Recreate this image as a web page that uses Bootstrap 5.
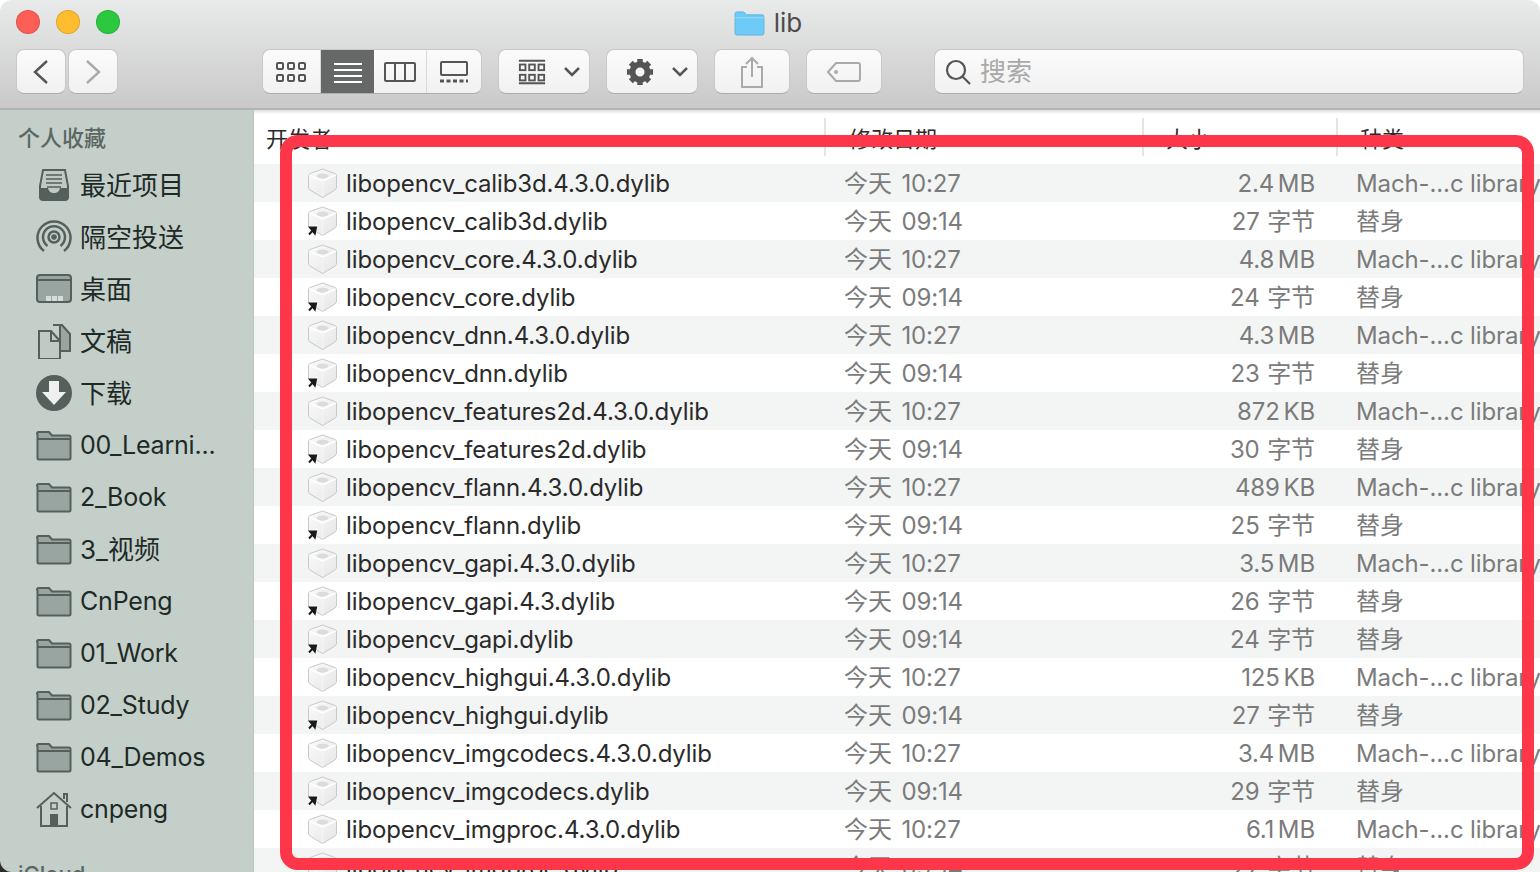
<!DOCTYPE html>
<html lang="zh-CN">
<head>
  <meta charset="UTF-8">
  <title>lib</title>
  <link rel="stylesheet" href="https://cdn.jsdelivr.net/npm/bootstrap@5.3.0/dist/css/bootstrap.min.css">
  <style>
    html, body { height: 100%; }
    body { background: #fff; overflow: hidden; font-family: Inter, "Noto Sans CJK SC", sans-serif; }
    .win { width: 1540px; height: 872px; position: relative; overflow: hidden; background: #fff; }
    .topbar { height: 110px; background: linear-gradient(#e9eaea, #c9c9c9); border-bottom: 2px solid #b3b3b3; border-radius: 12px 12px 0 0; }
    .titlerow { height: 49px; padding: 0 4px 3px 0; position: relative; }
    .lights { position: absolute; left: 16px; top: 10px; gap: 16px; }
    .light { width: 24px; height: 24px; border-radius: 50%; border: 1px solid rgba(0,0,0,.12); }
    .titletext { font-size: 26px; line-height: 46px; color: #4c4c4c; margin-left: 9px; }
    .tools { padding-left: 16px; height: 46px; }
    .tbtn { height: 45px; background: linear-gradient(#fbfbfb, #f1f1f1); border: 1px solid #c9c9c9; border-bottom-color: #aeaeae; border-radius: 8px; display: flex; align-items: center; justify-content: center; }
    .b-nav { width: 50px; }
    .b-views { width: 220px; margin-left: 144px; overflow: hidden; align-items: stretch; justify-content: flex-start; }
    .seg { display: flex; align-items: center; justify-content: center; border-right: 1px solid #d8d8d8; }
    .seg.on { background: #666867; border-right: 0; height: 47px; margin-top: -1px; }
    .b-menu { width: 92px; padding-left: 19px; gap: 18px; justify-content: flex-start; }
    .b-wide { width: 76px; }
    .searchbox { width: 590px; margin-left: 52px; justify-content: flex-start; padding-left: 10px; gap: 9px; font-size: 26px; color: #a9a9a9; }
    .main { height: 762px; background: #2b2b2b; }
    .side { width: 254px; flex: none; background: #c4cfca; border-right: 1px solid #b9c3bf; height: 100%; padding-top: 13px; position: relative; border-bottom-left-radius: 12px; overflow: hidden; }
    .side-h { font-size: 22px; font-weight: 500; color: #5b6762; padding-left: 18px; line-height: 30px; margin-bottom: 6px; }
    .side-cloud { margin-top: 24px; }
    .side-i { height: 52px; padding-left: 36px; color: #1d2a26; font-size: 26px; gap: 8px; white-space: nowrap; }
    .side-latin { font-size: 25px; letter-spacing: -.2px; padding-top: 1px; }
    .side-ic { width: 36px; height: 36px; flex: none; }
    .listing { flex: 1; min-width: 0; background: #fff; box-shadow: inset 0 5px 3px -3px #ddd; padding-top: 8px; }
    .hdr { height: 46px; font-size: 22px; color: #2b2b2b; line-height: 42px; }
    .hc { overflow: hidden; height: 38px; white-space: nowrap; }
    .hc + .hc { border-left: 2px solid #e4e4e4; }
    .c-name { width: 570px; padding-left: 12px; }
    .c-date { width: 318px; padding-left: 23px; }
    .c-size { width: 194px; padding-left: 22px; }
    .c-kind { flex: 1; padding-left: 22px; }
    .frow { height: 38px; font-size: 24px; letter-spacing: -.12px; line-height: 40px; white-space: nowrap; overflow: hidden; }
    .frow:nth-child(odd) { background: #f3f5f4; }
    .f-name { width: 571px; flex: none; padding-left: 54px; color: #2a2a2a; gap: 9px; }
    .f-name span { padding-top: 2px; }
    .f-icon { width: 29px; height: 30px; flex: none; overflow: visible; }
    .f-date { width: 319px; flex: none; padding-left: 19px; color: #7b7b7b; word-spacing: 3px; }
    .f-size { width: 171px; flex: none; text-align: right; color: #7b7b7b; word-spacing: -3px; }
    .f-bytes { word-spacing: 1px; }
    .f-kind { flex: 1; padding-left: 41px; color: #7b7b7b; }
    .redframe { position: absolute; left: 280px; top: 135px; width: 1254px; height: 735px; border: 12px solid #fe364a; border-radius: 18px; pointer-events: none; }
  </style>
</head>
<body>
  <svg width="0" height="0" class="d-block position-absolute">
    <defs>
      <linearGradient id="cubeFill" x1="0" y1="0" x2="1" y2="1">
        <stop offset="0" stop-color="#fbfbfb"/>
        <stop offset="1" stop-color="#e6e6e6"/>
      </linearGradient>
      <symbol id="cube" viewBox="0 0 29 30">
        <path d="M14.500 1 27 5.500Q28.500 6 28.500 8V19Q28.500 21 27 22L15.500 29Q14.500 29.500 13.500 29L2 22Q.5 21 .5 19V8Q.5 6 2 5.500Z" fill="url(#cubeFill)" stroke="#c9c9c9"/>
        <path d="M1.500 7 14.500 13 27.500 7" fill="none" stroke="#fff" stroke-width="1.500"/>
        <path d="M14.500 13V28" stroke="#f4f4f4" stroke-width="1.500"/>
        <ellipse cx="14.500" cy="8" rx="6" ry="2.600" fill="#dcdcdc"/>
      </symbol>
      <symbol id="fold" viewBox="0 0 36 36">
        <path d="M1.500 7.500V31a1.500 1.500 0 0 0 1.500 1.500H33a1.500 1.500 0 0 0 1.500-1.500V10A1.500 1.500 0 0 0 33 8.500H16L13 5H3A1.500 1.500 0 0 0 1.500 7.500Z" fill="#98a5a0" stroke="#53605b" stroke-width="2"/>
        <path d="M2 12H34" stroke="#53605b" stroke-width="2"/>
      </symbol>
    </defs>
  </svg>

  <div class="win">
    <div class="topbar">
      <div class="titlerow d-flex align-items-center justify-content-center">
        <div class="lights d-flex">
          <div class="light" style="background:#fd5f57"></div>
          <div class="light" style="background:#febc2e"></div>
          <div class="light" style="background:#2cc840"></div>
        </div>
        <svg width="31" height="25" viewBox="0 0 32 26"><path d="M1 3a2 2 0 0 1 2-2H10L13 4H29a2 2 0 0 1 2 2V23a2 2 0 0 1-2 2H3a2 2 0 0 1-2-2Z" fill="#6ecbf8" stroke="#5fb2dd"/><path d="M1 7H31" stroke="#9adcfb"/></svg>
        <span class="titletext">lib</span>
      </div>
      <div class="tools d-flex">
        <div class="tbtn b-nav"><svg width="18" height="26" viewBox="0 0 18 26"><path d="M15 2 3 13 15 24" fill="none" stroke="#555" stroke-width="2.400"/></svg></div>
        <div class="tbtn b-nav" style="margin-left:2px"><svg width="18" height="26" viewBox="0 0 18 26"><path d="M3 2 15 13 3 24" fill="none" stroke="#aaa" stroke-width="2.400"/></svg></div>
        <div class="tbtn b-views">
          <div class="seg" style="width:58px"><svg width="30" height="22" viewBox="0 0 30 22" fill="none" stroke="#555" stroke-width="2"><rect x="1" y="2" width="6" height="6" rx="1"/><rect x="12" y="2" width="6" height="6" rx="1"/><rect x="23" y="2" width="6" height="6" rx="1"/><rect x="1" y="14" width="6" height="6" rx="1"/><rect x="12" y="14" width="6" height="6" rx="1"/><rect x="23" y="14" width="6" height="6" rx="1"/></svg></div>
          <div class="seg on" style="width:54px"><svg width="28" height="22" viewBox="0 0 28 22" stroke="#fff" stroke-width="2"><path d="M0 2H28M0 8H28M0 14H28M0 20H28"/></svg></div>
          <div class="seg" style="width:53px"><svg width="32" height="20" viewBox="0 0 32 20" fill="none" stroke="#555" stroke-width="2"><rect x="1" y="1" width="30" height="18" rx="1"/><path d="M11 1V19M21 1V19"/></svg></div>
          <div class="seg border-0" style="width:54px"><svg width="30" height="22" viewBox="0 0 30 22" fill="none" stroke="#555" stroke-width="2"><rect x="2" y="1" width="26" height="13" rx="1"/><path d="M1 20H29" stroke-width="3" stroke-dasharray="4 2.500"/></svg></div>
        </div>
        <div class="tbtn b-menu ms-3">
          <svg width="28" height="28" viewBox="0 0 30 28" fill="none" stroke="#555" stroke-width="2"><path d="M1 2H29M1 26H29"/><rect x="2" y="6" width="6" height="6"/><rect x="12" y="6" width="6" height="6"/><rect x="22" y="6" width="6" height="6"/><rect x="2" y="17" width="6" height="6"/><rect x="12" y="17" width="6" height="6"/><rect x="22" y="17" width="6" height="6"/></svg>
          <svg width="16" height="10" viewBox="0 0 16 10"><path d="M1 1 8 8 15 1" fill="none" stroke="#555" stroke-width="2.500"/></svg>
        </div>
        <div class="tbtn b-menu ms-3">
          <svg width="28" height="28" viewBox="0 0 28 28"><circle cx="14" cy="14" r="7.500" fill="none" stroke="#555" stroke-width="6"/><path d="M14 1V27M1 14H27M4.800 4.800 23.200 23.200M23.200 4.800 4.800 23.200" stroke="#555" stroke-width="5.500" stroke-dasharray="6 14 6 0"/></svg>
          <svg width="16" height="10" viewBox="0 0 16 10"><path d="M1 1 8 8 15 1" fill="none" stroke="#555" stroke-width="2.500"/></svg>
        </div>
        <div class="tbtn b-wide ms-3"><svg width="24" height="32" viewBox="0 0 24 32" fill="none" stroke="#aaa" stroke-width="2"><path d="M7 11H2V31H22V11H17M12 21V2M6 8 12 2 18 8"/></svg></div>
        <div class="tbtn b-wide ms-3"><svg width="34" height="20" viewBox="0 0 34 20" fill="none" stroke="#aaa" stroke-width="2"><path d="M9 1H31a2 2 0 0 1 2 2V17a2 2 0 0 1-2 2H9L1 10Z"/><circle cx="9" cy="10" r="1" fill="#aaa"/></svg></div>
        <div class="tbtn searchbox"><svg width="26" height="26" viewBox="0 0 26 26" fill="none" stroke="#555" stroke-width="2.200"><circle cx="11" cy="11" r="9"/><path d="M17.500 17.500 25 25"/></svg><span>搜索</span></div>
      </div>
    </div>

    <div class="main d-flex">
      <div class="side">
        <div class="side-h">个人收藏</div>
        <div id="sideList"></div>
        <div class="side-h side-cloud">iCloud</div>
      </div>
      <div class="listing">
        <div class="hdr d-flex">
          <div class="hc c-name">开发者</div>
          <div class="hc c-date">修改日期</div>
          <div class="hc c-size">大小</div>
          <div class="hc c-kind">种类</div>
        </div>
        <div id="fileList"></div>
      </div>
    </div>

    <div class="redframe"></div>
  </div>

  <script src="https://cdn.jsdelivr.net/npm/bootstrap@5.3.0/dist/js/bootstrap.bundle.min.js"></script>
  <script>
    const folderIcon = '<svg class="side-ic"><use href="#fold"/></svg>';
    const sideIcons = {
      recent: '<svg class="side-ic" viewBox="0 0 36 36"><path d="M7 3H29L32 19V30a3 3 0 0 1-3 3H7a3 3 0 0 1-3-3V19Z" fill="#bfcac5" stroke="#53605b" stroke-width="2"/><path d="M4 21H12C13 25 15 26 18 26S23 25 24 21H32V30a3 3 0 0 1-3 3H7a3 3 0 0 1-3-3Z" fill="#53605b"/><path d="M10 8H26M10 12H26M10 16H26M11 20H25" stroke="#53605b" stroke-width="1.500"/></svg>',
      airdrop: '<svg class="side-ic" viewBox="0 0 36 36" fill="none" stroke="#53605b" stroke-width="2.500"><path d="M8 32A16.500 16.500 0 1 1 28 32"/><path d="M11.500 27A11 11 0 1 1 24.500 27"/><circle cx="18" cy="18" r="5.500"/><circle cx="18" cy="18" r="1.500" fill="#53605b"/></svg>',
      desktop: '<svg class="side-ic" viewBox="0 0 36 36"><rect x="1" y="4" width="34" height="27" rx="3" fill="#98a5a0" stroke="#53605b" stroke-width="2"/><path d="M1 9H35" stroke="#53605b" stroke-width="2"/><path d="M10 25H15V30H10ZM16 25H21V30H16ZM22 25H27V30H22Z" fill="#d5dcd9"/></svg>',
      docs: '<svg class="side-ic" viewBox="0 0 36 36"><path d="M17 2H26L34 11V28H24V2Z" fill="#98a5a0" stroke="#53605b" stroke-width="2"/><path d="M3 8H15L24 18V36H3Z" fill="#bfcac5" stroke="#53605b" stroke-width="2"/><path d="M15 8V18H24" fill="none" stroke="#53605b" stroke-width="2"/></svg>',
      download: '<svg class="side-ic" viewBox="0 0 36 36"><circle cx="18" cy="18" r="18" fill="#53605b"/><path d="M13 6H23V17H30L18 30 6 17H13Z" fill="#eef1f0"/></svg>',
      home: '<svg class="side-ic" viewBox="0 0 36 36"><path d="M1 17 18 2 35 17M28 8V3H31V11" fill="none" stroke="#53605b" stroke-width="2"/><path d="M5 15V35H31V15" fill="none" stroke="#53605b" stroke-width="2"/><rect x="15" y="12" width="6" height="6" fill="none" stroke="#53605b" stroke-width="1.500"/><rect x="14" y="23" width="8" height="12" fill="#53605b"/></svg>'
    };
    const sideItems = [
      ['最近项目', sideIcons.recent], ['隔空投送', sideIcons.airdrop], ['桌面', sideIcons.desktop],
      ['文稿', sideIcons.docs], ['下载', sideIcons.download], ['00_Learni...', folderIcon],
      ['2_Book', folderIcon], ['3_视频', folderIcon], ['CnPeng', folderIcon], ['01_Work', folderIcon],
      ['02_Study', folderIcon], ['04_Demos', folderIcon], ['cnpeng', sideIcons.home]
    ];
    document.getElementById('sideList').innerHTML = sideItems.map(s =>
      `<div class="side-i d-flex align-items-center">${s[1]}<span class="${/^[\x00-\x7f]+$/.test(s[0]) ? 'side-latin' : ''}">${s[0]}</span></div>`).join('');

    const MACH = 'Mach-...c library';
    const ALIAS = '替身';
    const files = [
      ['libopencv_calib3d.4.3.0.dylib', '今天 10:27', '2.4 MB', MACH],
      ['libopencv_calib3d.dylib', '今天 09:14', '27 字节', ALIAS],
      ['libopencv_core.4.3.0.dylib', '今天 10:27', '4.8 MB', MACH],
      ['libopencv_core.dylib', '今天 09:14', '24 字节', ALIAS],
      ['libopencv_dnn.4.3.0.dylib', '今天 10:27', '4.3 MB', MACH],
      ['libopencv_dnn.dylib', '今天 09:14', '23 字节', ALIAS],
      ['libopencv_features2d.4.3.0.dylib', '今天 10:27', '872 KB', MACH],
      ['libopencv_features2d.dylib', '今天 09:14', '30 字节', ALIAS],
      ['libopencv_flann.4.3.0.dylib', '今天 10:27', '489 KB', MACH],
      ['libopencv_flann.dylib', '今天 09:14', '25 字节', ALIAS],
      ['libopencv_gapi.4.3.0.dylib', '今天 10:27', '3.5 MB', MACH],
      ['libopencv_gapi.4.3.dylib', '今天 09:14', '26 字节', ALIAS],
      ['libopencv_gapi.dylib', '今天 09:14', '24 字节', ALIAS],
      ['libopencv_highgui.4.3.0.dylib', '今天 10:27', '125 KB', MACH],
      ['libopencv_highgui.dylib', '今天 09:14', '27 字节', ALIAS],
      ['libopencv_imgcodecs.4.3.0.dylib', '今天 10:27', '3.4 MB', MACH],
      ['libopencv_imgcodecs.dylib', '今天 09:14', '29 字节', ALIAS],
      ['libopencv_imgproc.4.3.0.dylib', '今天 10:27', '6.1 MB', MACH],
      ['libopencv_imgproc.dylib', '今天 09:14', '27 字节', ALIAS]
    ];
    const cubeSvg = '<svg class="f-icon" viewBox="0 0 29 30"><use href="#cube" width="29" height="30"/></svg>';
    const aliasSvg = '<svg class="f-icon" viewBox="0 0 29 30"><use href="#cube" width="29" height="30"/><path d="M-.5 30 2 24.500 .5 23 9.500 18.500 7.500 28 6 26.500Z" fill="#fff"/><path d="M1 28.500 5.500 23.500M2 21.500H8L6.800 27.500Z" fill="#1a1a1a" stroke="#1a1a1a" stroke-width="2"/></svg>';
    document.getElementById('fileList').innerHTML = files.map(f => `
      <div class="frow d-flex">
        <div class="f-name d-flex align-items-center">${f[3] === ALIAS ? aliasSvg : cubeSvg}<span>${f[0]}</span></div>
        <div class="f-date">${f[1]}</div>
        <div class="f-size ${f[3] === ALIAS ? 'f-bytes' : ''}">${f[2]}</div>
        <div class="f-kind">${f[3]}</div>
      </div>`).join('');
  </script>
</body>
</html>
